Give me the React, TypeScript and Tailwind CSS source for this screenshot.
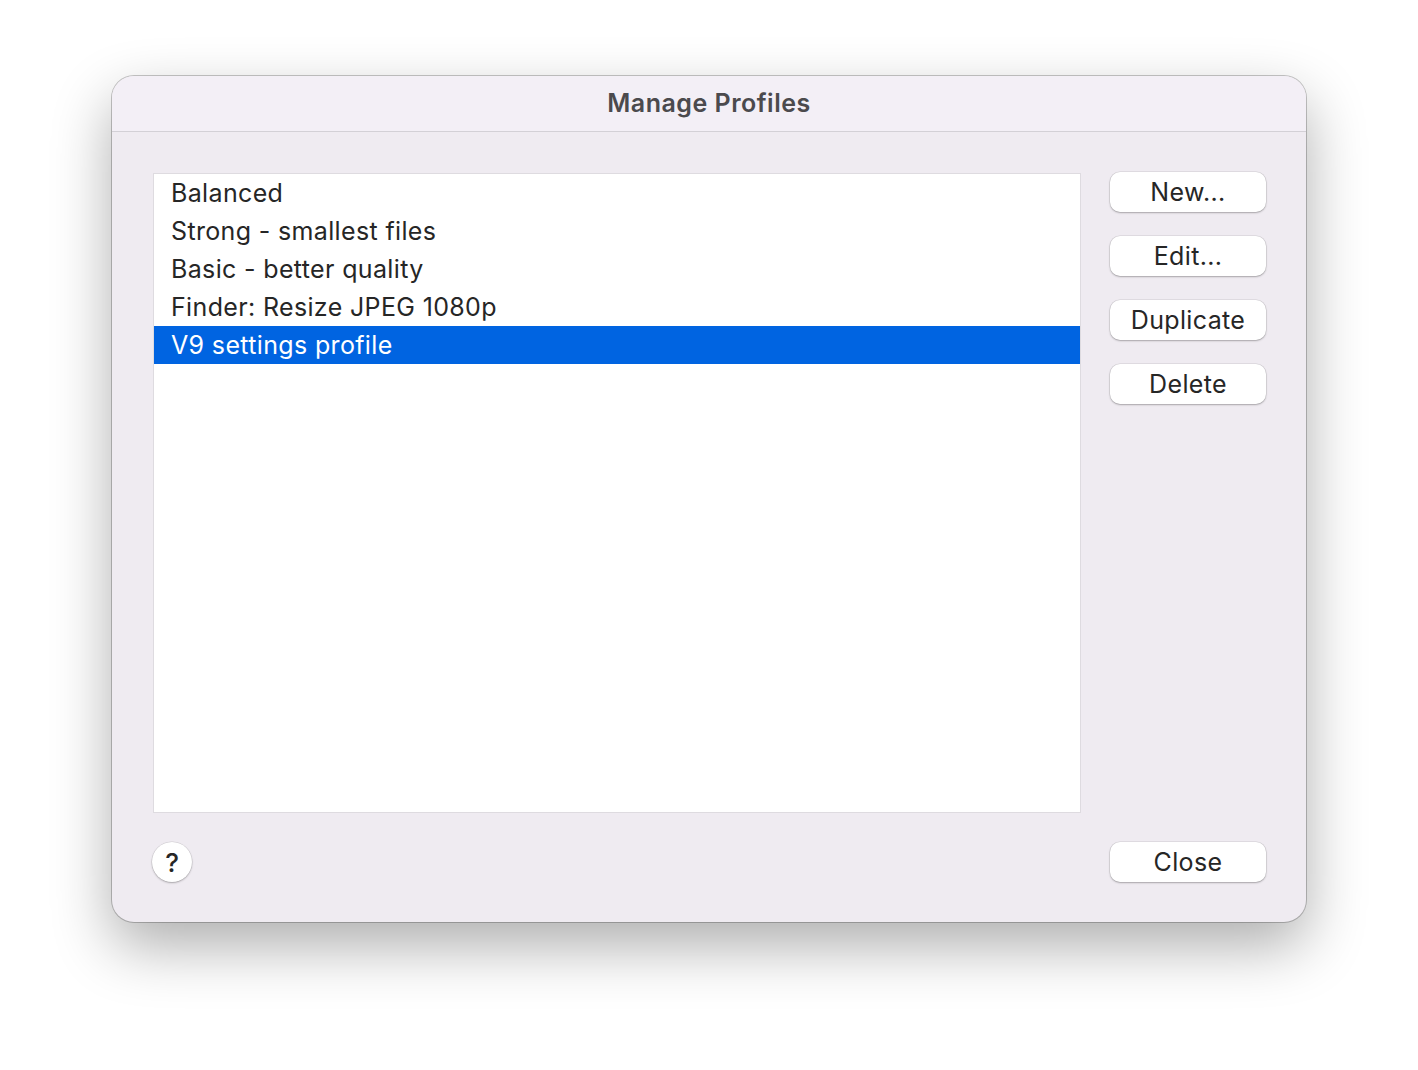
import React from "react";

const profiles = [
  "Balanced",
  "Strong - smallest files",
  "Basic - better quality",
  "Finder: Resize JPEG 1080p",
  "V9 settings profile",
];

const selected = 4;

function MacButton({ label }: { label: string }) {
  return (
    <button className="h-[40px] w-[156px] rounded-[10px] bg-white text-[25px] leading-none tracking-[0.35px] text-[#262626] shadow-[0_0_0_0.5px_rgba(0,0,0,0.12),0_1px_2px_rgba(0,0,0,0.25)]">
      {label}
    </button>
  );
}

export default function App() {
  return (
    <div
      className="h-[1070px] w-[1418px] bg-white pl-[112px] pt-[76px]"
      style={{ fontFamily: "Inter, 'Noto Sans', sans-serif" }}
    >
      <div className="flex h-[846px] w-[1194px] flex-col overflow-hidden rounded-[22px] bg-[#efebf1] shadow-[0_0_0_1px_rgba(0,0,0,0.22),0_24px_60px_rgba(0,0,0,0.32)]">
        {/* title bar */}
        <div className="flex h-[56px] shrink-0 items-center justify-center border-b border-[#d3d0d6] bg-[#f3eff6]">
          <span className="text-[25px] font-semibold tracking-[0.5px] text-[#4b4a4d]">Manage Profiles</span>
        </div>

        {/* body */}
        <div className="flex flex-1 flex-col pb-[40px] pl-[41px] pr-[40px] pt-[41px]">
          <div className="flex gap-[29px]">
            <div className="h-[640px] w-[928px] border border-[#dedbe0] bg-white">
              {profiles.map((p, i) => (
                <div
                  key={p}
                  className={
                    i === selected
                      ? "flex h-[38px] items-center bg-[#0064e1] pl-[17px] pt-[1px] text-[25px] tracking-[0.35px] text-white"
                      : "flex h-[38px] items-center pl-[17px] pt-[1px] text-[25px] tracking-[0.35px] text-[#262626]"
                  }
                >
                  {p}
                </div>
              ))}
            </div>
            <div className="-mt-px flex flex-col gap-[24px]">
              <MacButton label="New..." />
              <MacButton label="Edit..." />
              <MacButton label="Duplicate" />
              <MacButton label="Delete" />
            </div>
          </div>

          <div className="mt-[29px] flex items-center justify-between">
            <button className="-ml-px flex h-[40px] w-[40px] items-center justify-center rounded-full bg-white text-[26px] font-medium text-[#262626] shadow-[0_0_0_0.5px_rgba(0,0,0,0.12),0_1px_2px_rgba(0,0,0,0.25)]">
              ?
            </button>
            <MacButton label="Close" />
          </div>
        </div>
      </div>
    </div>
  );
}
